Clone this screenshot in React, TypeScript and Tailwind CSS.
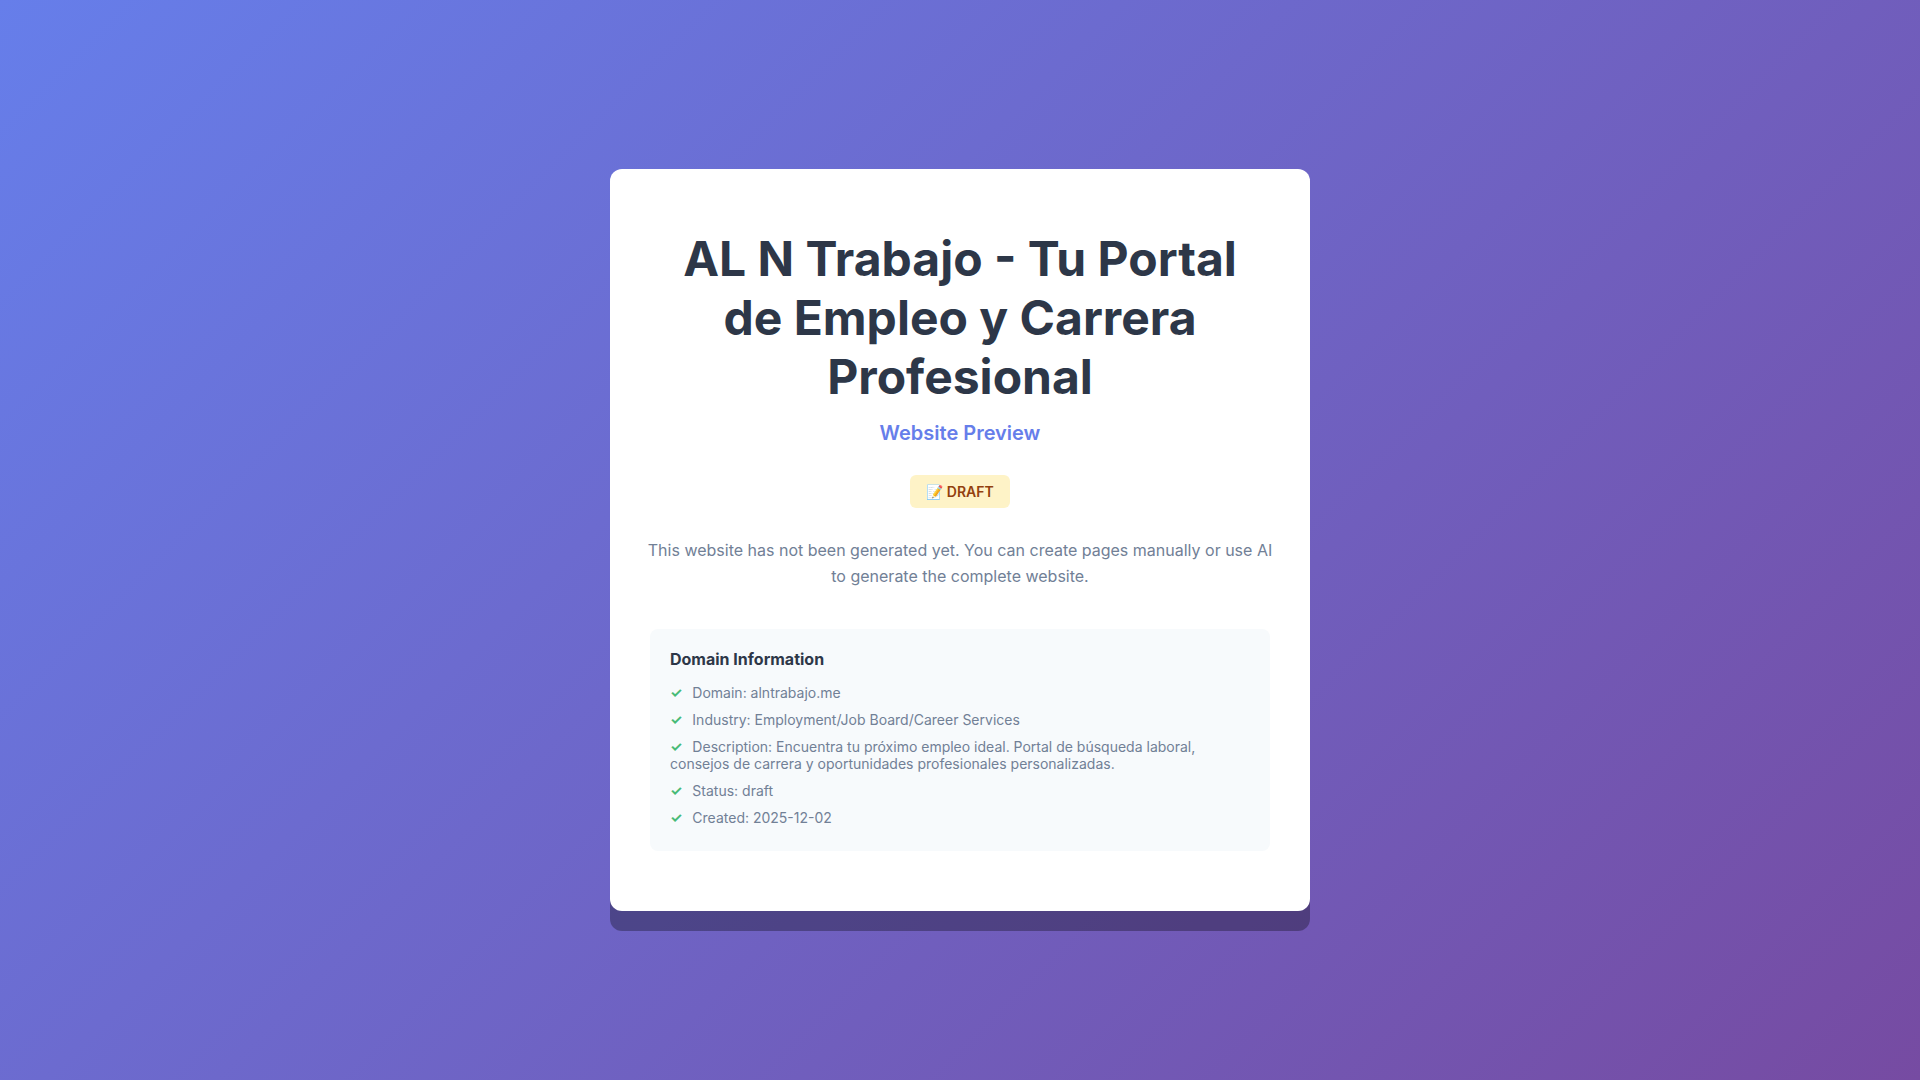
const details = [
  'Domain: alntrabajo.me',
  'Industry: Employment/Job Board/Career Services',
  'Description: Encuentra tu próximo empleo ideal. Portal de búsqueda laboral, consejos de carrera y oportunidades profesionales personalizadas.',
  'Status: draft',
  'Created: 2025-12-02',
];

export default function App() {
  return (
    <main className="min-h-screen flex items-center justify-center bg-[linear-gradient(135deg,#667eea_0%,#764ba2_100%)] font-['Inter',sans-serif]">
      <div className="w-full max-w-[700px] flex flex-col items-center bg-white rounded-xl px-10 py-15 text-center shadow-[0_20px_0_rgba(0,0,0,0.3)]">
        <h1 className="text-5xl leading-[59px] font-bold text-[#2d3748] mb-[15px]">
          AL N Trabajo - Tu Portal de Empleo y Carrera Profesional
        </h1>
        <h2 className="text-xl leading-6 font-semibold text-[#667eea] mb-[30px]">Website Preview</h2>
        <span className="bg-[#fef3c7] text-[#92400e] text-sm leading-[17px] font-semibold rounded-md px-4 py-2 mb-[29px]">
          📝 DRAFT
        </span>
        <p className="-mx-2 text-base leading-[26px] text-[#718096] mb-10">
          This website has not been generated yet. You can create pages manually or use AI to generate the complete website.
        </p>

        <section className="w-full bg-[#f7fafc] rounded-lg p-5 text-left">
          <h3 className="text-base leading-5 font-bold text-[#2d3748] mb-[10px]">Domain Information</h3>
          <ul>
            {details.map((item) => (
              <li
                key={item}
                className="text-sm leading-[17px] text-[#718096] py-[5px] before:content-['✓'] before:text-[#48bb78] before:font-bold before:mr-[10px]"
              >
                {item}
              </li>
            ))}
          </ul>
        </section>
      </div>
    </main>
  );
}
